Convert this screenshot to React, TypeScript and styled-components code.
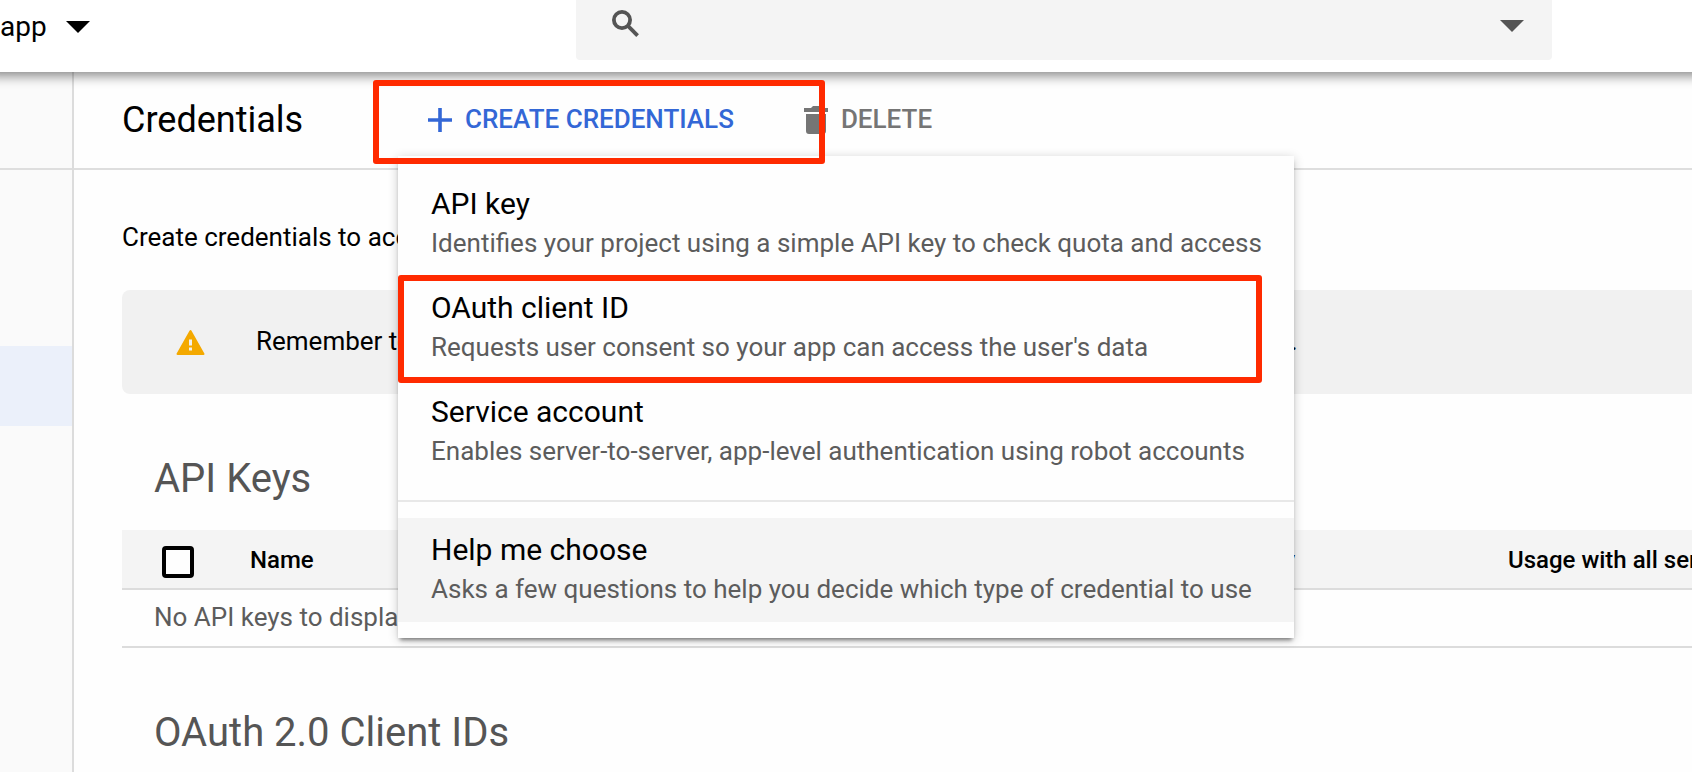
import React from "react";
import styled, { createGlobalStyle } from "styled-components";

const GlobalStyle = createGlobalStyle`
  *, *::before, *::after { box-sizing: border-box; }
  body {
    margin: 0;
    background: #fefefe;
    color: #000;
    font-family: Roboto, "Liberation Sans", sans-serif;
    font-size: 26px;
    line-height: 32px;
  }
  button, input { font: inherit; color: inherit; }
  h1, h2, p { margin: 0; font-weight: 400; }
`;

const Page = styled.div`
  display: flex;
  flex-direction: column;
  min-height: 100vh;
  overflow-x: clip;
`;

const TopBar = styled.header`
  display: flex;
  align-items: flex-start;
  height: 72px;
  padding-right: 140px;
  background: #fff;
  box-shadow: 0 -8px 11px 12px rgba(0, 0, 0, 0.46);
  position: relative;
  z-index: 1;
`;

const ProjectArea = styled.div`
  flex: 0 0 576px;
`;

const PlainButton = styled.button`
  display: flex;
  align-items: center;
  border: 0;
  padding: 0;
  background: none;
  cursor: pointer;
`;

const ProjectButton = styled(PlainButton)`
  gap: 19px;
  height: 54px;
  font-size: 28px;
`;

const SearchBox = styled.div`
  flex: 1;
  display: flex;
  align-items: center;
  height: 60px;
  padding: 0 28px 14px 36px;
  border-radius: 0 0 4px 4px;
  background: #f4f4f4;
  color: #545454;
`;

const SearchInput = styled.input`
  flex: 1;
  min-width: 0;
  height: 40px;
  margin: 0 20px;
  border: 0;
  outline: 0;
  background: transparent;
`;

const OptionsButton = styled(PlainButton)`
  padding-top: 6px;
`;

const Body = styled.div`
  flex: 1;
  display: flex;
`;

const Sidebar = styled.nav`
  flex: 0 0 74px;
  border-right: 2px solid #dcdcdc;
  background: #fafafa;
`;

const SidebarHeading = styled.div`
  height: 98px;
  border-bottom: 2px solid #dedede;
`;

const SidebarCurrent = styled.a`
  display: block;
  height: 80px;
  margin-top: 176px;
  background: #ebf0fa;
`;

const Main = styled.main`
  flex: 1;
  min-width: 0;
`;

const Toolbar = styled.div`
  display: flex;
  align-items: center;
  gap: 8px;
  height: 98px;
  padding-left: 48px;
  border-bottom: 2px solid #dedede;
`;

const Title = styled.h1`
  width: 268px;
  font-size: 36px;
  line-height: 40px;
`;

const MenuAnchor = styled.div`
  position: relative;
`;

const ActionButton = styled(PlainButton)<{ $tone: string }>`
  gap: 13px;
  height: 64px;
  padding: 0 32px 0 30px;
  color: ${(p) => p.$tone};
  font-weight: 500;
  white-space: nowrap;
`;

const ActionLabel = styled.span`
  padding-bottom: 2px;
`;

const Outline = styled.span`
  position: absolute;
  border: 6px solid #ff2a00;
  border-radius: 3px;
  pointer-events: none;
  z-index: 3;
`;

const ButtonOutline = styled(Outline)`
  left: -25px;
  top: -8px;
  width: 452px;
  height: 84px;
`;

const ItemOutline = styled(Outline)`
  left: 0;
  top: -1px;
  width: 864px;
  height: 108px;
`;

const Menu = styled.div`
  position: absolute;
  left: 0;
  top: 68px;
  width: 896px;
  padding: 16px 0;
  background: #fefefe;
  box-shadow: 0 4px 4px -2px rgba(0, 0, 0, 0.45), 0 2px 10px rgba(0, 0, 0, 0.2);
  z-index: 2;
`;

const MenuItem = styled.button<{ $active?: boolean }>`
  position: relative;
  display: flex;
  flex-direction: column;
  width: 100%;
  height: 104px;
  padding: 10px 32px 0 33px;
  border: 0;
  background: ${(p) => (p.$active ? "#f4f4f4" : "transparent")};
  text-align: left;
  white-space: nowrap;
  cursor: pointer;
`;

const ItemTitle = styled.span`
  font-size: 30px;
  line-height: 44px;
`;

const ItemText = styled.span`
  color: #5c5c5c;
  line-height: 34px;
`;

const MenuDivider = styled.hr`
  margin: 16px 0;
  border: 0;
  border-top: 2px solid #e8e8e8;
`;

const Content = styled.div`
  padding: 51px 0 0 48px;
`;

const Banner = styled.div`
  display: flex;
  align-items: center;
  gap: 51px;
  height: 104px;
  margin-top: 37px;
  padding-left: 54px;
  border-radius: 8px 0 0 8px;
  background: #f1f1f1;
  white-space: nowrap;
`;

const BannerText = styled.span`
  padding-bottom: 2px;
`;

const Section = styled.section`
  margin-top: 60px;
`;

const SectionTitle = styled.h2`
  padding-left: 32px;
  color: #555;
  font-size: 40px;
  line-height: 50px;
`;

const TableClip = styled.div`
  overflow: hidden;
  margin-top: 26px;
`;

const KeyTable = styled.table`
  width: 100%;
  table-layout: fixed;
  border-collapse: separate;
  border-spacing: 0;
  white-space: nowrap;
`;

const HeadCell = styled.th<{ $width?: number; $align?: string }>`
  width: ${(p) => (p.$width ? `${p.$width}px` : "auto")};
  height: 60px;
  padding: 2px 0 0;
  border-bottom: 2px solid #dcdcdc;
  background: #f4f4f4;
  font-size: 24px;
  font-weight: 500;
  text-align: ${(p) => p.$align || "left"};
`;

const EmptyCell = styled.td`
  height: 58px;
  padding: 0 0 2px 32px;
  border-bottom: 2px solid #dcdcdc;
  color: #5c5c5c;
`;

const CheckBox = styled.input`
  appearance: none;
  display: block;
  width: 32px;
  height: 32px;
  margin: 4px 0 0 40px;
  border: 4px solid #000;
  border-radius: 4px;
  background: #fefefe;
`;

const Caret = () => (
  <svg width="24" height="12" viewBox="0 0 24 12" fill="currentColor" aria-hidden="true">
    <path d="M0 0h24L12 12z" />
  </svg>
);

const SearchIcon = () => (
  <svg width="27" height="27" viewBox="0 0 27 27" fill="none" stroke="currentColor" strokeWidth="3.800" aria-hidden="true">
    <circle cx="10" cy="10" r="8.100" />
    <path d="M15.700 15.700L25.600 25.600" />
  </svg>
);

const PlusIcon = () => (
  <svg width="24" height="24" viewBox="0 0 24 24" fill="currentColor" aria-hidden="true">
    <path d="M10.200 0h3.600v10.200H24v3.600H13.800V24h-3.600V13.800H0v-3.600h10.200z" />
  </svg>
);

const TrashIcon = () => (
  <svg width="24" height="28" viewBox="0 0 24 28" fill="currentColor" aria-hidden="true">
    <path d="M0 2h7l2-2h6l2 2h7v4H0zM2 8h20v17a3 3 0 0 1-3 3H5a3 3 0 0 1-3-3z" />
  </svg>
);

const WarningIcon = () => (
  <svg width="29" height="26" viewBox="0 0 29 26" aria-hidden="true">
    <path d="M1.500 25h26L14.500 2z" fill="#f4a900" stroke="#f4a900" strokeWidth="2" strokeLinejoin="round" />
    <path d="M13 10.500h3v6h-3zM13 18.500h3v3h-3z" fill="#f1f1f1" />
  </svg>
);

const primaryItems = [
  { title: "API key", text: "Identifies your project using a simple API key to check quota and access" },
  { title: "OAuth client ID", text: "Requests user consent so your app can access the user's data", outlined: true },
  { title: "Service account", text: "Enables server-to-server, app-level authentication using robot accounts" },
];

export default function App() {
  return (
    <>
      <GlobalStyle />
      <Page>
        <TopBar>
          <ProjectArea>
            <ProjectButton type="button">
              app
              <Caret />
            </ProjectButton>
          </ProjectArea>
          <SearchBox>
            <SearchIcon />
            <SearchInput type="text" aria-label="Search" />
            <OptionsButton type="button" aria-label="Search options">
              <Caret />
            </OptionsButton>
          </SearchBox>
        </TopBar>
        <Body>
          <Sidebar>
            <SidebarHeading />
            <SidebarCurrent href="#credentials" aria-label="Credentials" />
          </Sidebar>
          <Main>
            <Toolbar>
              <Title>Credentials</Title>
              <MenuAnchor>
                <ActionButton type="button" $tone="#3367d6" aria-haspopup="menu" aria-expanded="true">
                  <PlusIcon />
                  <ActionLabel>CREATE CREDENTIALS</ActionLabel>
                </ActionButton>
                <ButtonOutline />
                <Menu role="menu">
                  {primaryItems.map((item) => (
                    <MenuItem key={item.title} type="button" role="menuitem">
                      <ItemTitle>{item.title}</ItemTitle>
                      <ItemText>{item.text}</ItemText>
                      {item.outlined && <ItemOutline />}
                    </MenuItem>
                  ))}
                  <MenuDivider />
                  <MenuItem type="button" role="menuitem" $active>
                    <ItemTitle>Help me choose</ItemTitle>
                    <ItemText>Asks a few questions to help you decide which type of credential to use</ItemText>
                  </MenuItem>
                </Menu>
              </MenuAnchor>
              <ActionButton type="button" $tone="#757575">
                <TrashIcon />
                <ActionLabel>DELETE</ActionLabel>
              </ActionButton>
            </Toolbar>
            <Content>
              <p>Create credentials to access your enabled APIs.</p>
              <Banner>
                <WarningIcon />
                <BannerText>
                  Remember to configure the OAuth consent screen with information about your application.
                </BannerText>
              </Banner>
              <Section>
                <SectionTitle>API Keys</SectionTitle>
                <TableClip>
                  <KeyTable>
                    <thead>
                      <tr>
                        <HeadCell $width={128}>
                          <CheckBox type="checkbox" aria-label="Select all API keys" />
                        </HeadCell>
                        <HeadCell $width={900}>Name</HeadCell>
                        <HeadCell $width={145} $align="right">Key</HeadCell>
                        <HeadCell $width={213} />
                        <HeadCell>Usage with all services</HeadCell>
                      </tr>
                    </thead>
                    <tbody>
                      <tr>
                        <EmptyCell colSpan={5}>No API keys to display</EmptyCell>
                      </tr>
                    </tbody>
                  </KeyTable>
                </TableClip>
              </Section>
              <Section>
                <SectionTitle>OAuth 2.0 Client IDs</SectionTitle>
              </Section>
            </Content>
          </Main>
        </Body>
      </Page>
    </>
  );
}
